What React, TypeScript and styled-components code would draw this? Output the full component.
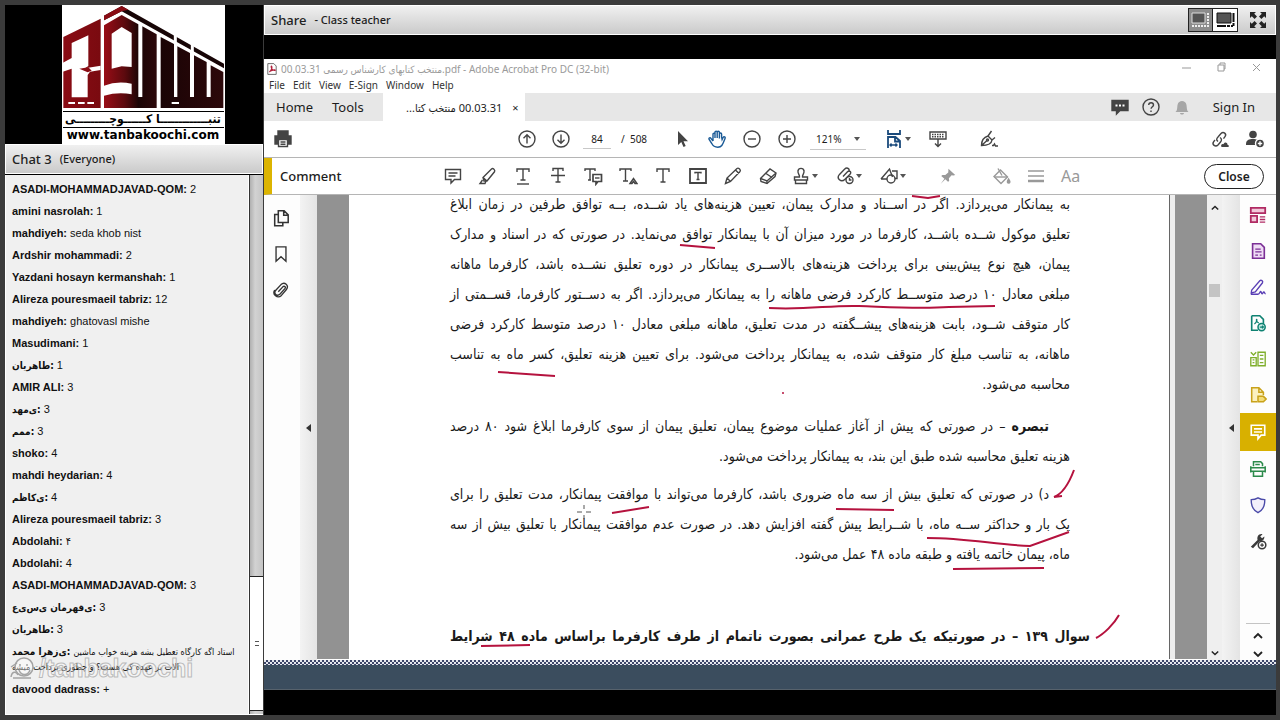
import React from 'react';
import styled, { createGlobalStyle } from 'styled-components';

const ui = '"Noto Sans", "Open Sans", "DejaVu Sans Condensed", sans-serif';
const persian = '"DejaVu Sans Condensed", "DejaVu Sans", sans-serif';

const Global = createGlobalStyle`
  *, *::before, *::after { box-sizing: border-box; }
  body { margin: 0; background: #3b3b3b; font-family: ${ui}; color: #1c1c1c; }
  button, input, select { font: inherit; color: inherit; }
  button { background: none; border: 0; padding: 0; }
`;

/* ---------- meeting shell ---------- */
const Shell = styled.div`
  display: grid;
  grid-template-columns: 258px minmax(0, 1fr);
  gap: 1px;
  min-height: 100vh;
  padding: 5px 4px 5px 5px;
`;
const Side = styled.aside`
  display: flex;
  flex-direction: column;
  min-height: 0;
`;
const Video = styled.div`
  display: flex;
  justify-content: center;
  background: #000;
  height: 139px;
  padding-left: 18px;
`;
const Brand = styled.figure`
  margin: 0;
  width: 163px;
  background: #fff;
  color: #000;
  display: flex;
  flex-direction: column;
  overflow: hidden;
`;
const BrandName = styled.span`
  font: bold 12px/15px ${persian};
  height: 17px;
  margin: 0 1px;
  border-top: 1px solid #000;
  border-bottom: 1px solid #000;
  text-align: center;
  white-space: nowrap;
`;
const BrandUrl = styled.span`
  font: bold 12px/15px "DejaVu Sans", sans-serif;
  text-align: center;
`;
const PodHeader = styled.header`
  display: flex;
  align-items: center;
  gap: 8px;
  height: 30px;
  padding: 0 5px 0 6px;
  border: 1px solid #fff;
  background: linear-gradient(#f0f0f0, #cacaca);
`;
const PodTitle = styled.h2`
  margin: 0;
  font-size: 13px;
  line-height: 18px;
  font-weight: 500;
  color: #222;
`;
const PodNote = styled.span`
  font-size: 11px;
  line-height: 18px;
  font-weight: 500;
`;
const ChatBody = styled.div`
  flex: 1;
  display: grid;
  grid-template-columns: minmax(0, 1fr) 14px;
  border-top: 1px solid #000;
  border-bottom: 1px solid #fff;
  background: #f0f0f0;
  position: relative;
`;
const Messages = styled.ul`
  list-style: none;
  margin: 0;
  padding: 3px 6px;
  border: solid #fff;
  border-width: 0 1px;
  font: 11px/16px "Liberation Sans", "DejaVu Sans Condensed", sans-serif;
  color: #111;
`;
const Message = styled.li`
  padding: 3px 0;
  white-space: nowrap;
`;
const Author = styled.b<{ $fa?: boolean }>`
  font-size: ${p => (p.$fa ? '10px' : '11px')};
  font-family: ${p => (p.$fa ? persian : 'inherit')};
  line-height: ${p => (p.$fa ? '10px' : 'inherit')};
`;
const PersianLine = styled.span<{ $block?: boolean }>`
  display: ${p => (p.$block ? 'block' : 'inline')};
  font: 9px/${p => (p.$block ? '16px' : '10px')} ${persian};
  text-align: left;
`;
const Watermark = styled.div`
  position: absolute;
  left: 5px;
  bottom: 32px;
  display: flex;
  align-items: center;
  gap: 3px;
  color: rgba(255, 255, 255, 0.3);
  font: bold 25px/28px "Liberation Sans", sans-serif;
  -webkit-text-stroke: 1px rgba(130, 130, 130, 0.5);
  pointer-events: none;
`;
const ChatScroll = styled.div`
  display: flex;
  flex-direction: column;
  justify-content: flex-end;
  background: linear-gradient(90deg, #b0b0b0, #d2d2d2 40%, #c4c4c4);
  border-left: 1px solid #333;
  padding-bottom: 3px;
`;
const ChatThumb = styled.div`
  height: 135px;
  background: #fff;
  border: solid #222;
  border-width: 1px 0;
  display: flex;
  align-items: center;
  justify-content: center;
`;
const Grip = styled.span`
  width: 4px;
  height: 5px;
  border: solid #555;
  border-width: 1px 0;
`;

const Stage = styled.main`
  display: flex;
  flex-direction: column;
  min-width: 0;
  background: #000;
`;
const StageHeader = styled(PodHeader)`
  margin-bottom: 24px;
`;
const Push = styled.span`
  flex: 1;
`;
const ViewToggle = styled.button<{ $on?: boolean }>`
  width: 25px;
  height: 24px;
  display: grid;
  place-items: center;
  border: 1px solid #222;
  background: ${p => (p.$on ? '#8c8c8c' : '#fff')};
  & + & { border-left: 0; }
`;
const ToggleGroup = styled.div`
  display: flex;
`;

/* ---------- document window ---------- */
const Window = styled.section`
  flex: 1;
  display: flex;
  flex-direction: column;
  background: #fff;
  min-width: 0;
`;
const TitleBar = styled.div`
  display: flex;
  align-items: center;
  height: 19px;
  padding: 0 14px 0 2px;
  gap: 3px;
  font-size: 10px;
  color: #9a9a9a;
  white-space: nowrap;
`;
const WindowButtons = styled.div`
  display: flex;
  gap: 24px;
`;
const MenuBar = styled.nav`
  display: flex;
  gap: 8px;
  height: 15px;
  padding: 0 5px;
  font-size: 10px;
  line-height: 15px;
  color: #333;
`;
const MenuItem = styled.button`
  line-height: 15px;
`;
const Tabs = styled.div`
  display: flex;
  align-items: center;
  height: 28px;
  background: #e7e7e7;
  font-size: 13px;
  padding-right: 9px;
`;
const Tab = styled.button`
  padding: 0 12px;
  line-height: 28px;
  & + & { margin-left: -5px; }
`;
const FileTab = styled.div`
  display: flex;
  align-items: center;
  justify-content: flex-end;
  gap: 10px;
  width: 142px;
  height: 28px;
  margin-left: 7px;
  padding-right: 6px;
  background: #fff;
  font-size: 11px;
  white-space: nowrap;
`;
const TabActions = styled.div`
  display: flex;
  align-items: center;
  gap: 7px;
  margin-left: auto;
`;
const Bar = styled.div`
  display: flex;
  align-items: center;
  height: 37px;
  border-bottom: 1px solid #b5b5b5;
  padding: 0 9px 0 7px;
`;
const CommentBar = styled(Bar)`
  border-left: 8px solid #dcb400;
  padding: 0 12px 0 8px;
`;
const Lead = styled.div<{ $w: number }>`
  width: ${p => p.$w}px;
  flex: none;
  font-size: 13px;
  line-height: 20px;
  font-weight: 500;
`;
const Group = styled.div<{ $gap?: number; $before?: number }>`
  display: flex;
  align-items: center;
  gap: ${p => p.$gap ?? 11}px;
  margin-left: ${p => p.$before ?? 0}px;
`;
const Tool = styled.button<{ $tone?: string; $wide?: boolean }>`
  display: flex;
  align-items: center;
  gap: 1px;
  width: ${p => (p.$wide ? 38 : 24)}px;
  height: 26px;
  padding: 0 2px;
  color: ${p => p.$tone ?? '#444'};
`;
const PageInput = styled.input`
  width: 28px;
  height: 20px;
  border: 0;
  border-bottom: 1px solid #c8c8c8;
  background: none;
  text-align: center;
  font-size: 10px;
  padding: 0;
`;
const Small = styled.span`
  font-size: 10px;
  white-space: nowrap;
`;
const ZoomSelect = styled.select`
  width: 56px;
  height: 21px;
  border: 0;
  border-bottom: 1px solid #c8c8c8;
  background: none;
  appearance: none;
  font-size: 10px;
  padding: 0 6px;
`;
const ZoomBox = styled.label`
  display: flex;
  align-items: center;
  & svg { margin-left: -12px; pointer-events: none; }
`;
const CloseButton = styled.button`
  width: 60px;
  height: 25px;
  border: 1px solid #222;
  border-radius: 13px;
  font-size: 12px;
  font-weight: 600;
`;

const Work = styled.div`
  flex: 1;
  display: grid;
  grid-template-columns: 36px 17px minmax(0, 1fr) 15px 18px 36px;
  height: 464px;
`;
const Rail = styled.div`
  display: flex;
  flex-direction: column;
  align-items: center;
  background: #fdfdfd;
  padding-top: 2px;
`;
const NavRail = styled(Rail)`
  padding: 5px 2px 0 0;
`;
const RailButton = styled.button<{ $tone?: string; $on?: boolean }>`
  width: 100%;
  height: ${p => (p.$on ? 38 : 36)}px;
  flex: none;
  display: grid;
  place-items: center;
  color: ${p => (p.$on ? '#fff' : p.$tone ?? '#333')};
  background: ${p => (p.$on ? '#d8b000' : 'none')};
`;
const RailPager = styled.div`
  margin-top: auto;
  width: 24px;
  border-top: 1px solid #c4c4c4;
  display: flex;
  flex-direction: column;
  align-items: center;
  & button { height: 18px; }
`;
const Fold = styled.button<{ $side: 'l' | 'r' }>`
  display: flex;
  align-items: center;
  justify-content: ${p => (p.$side === 'l' ? 'center' : 'flex-end')};
  padding: ${p => (p.$side === 'l' ? '0' : '0 6px 0 0')};
  background: linear-gradient(90deg, #f3f3f3, #e4e4e4);
  color: #333;
`;
const Canvas = styled.div`
  background: #929292;
  padding: 0 32px;
  overflow: hidden;
  height: 464px;
`;
const Paper = styled.article`
  height: 100%;
  background: #fff;
  border-right: 5px solid #ededed;
  box-shadow: inset -1px 0 0 #666;
  display: flex;
  justify-content: flex-end;
  padding: 0 80px 0 20px;
  overflow: hidden;
`;
const Sheet = styled.div`
  position: relative;
  flex: none;
  width: 640px;
  margin-top: -6px;
  font: 14px/30px ${persian};
  color: #1a1a1a;
`;
const Para = styled.p<{ $gap: number; $indent?: boolean }>`
  margin: 0 20px ${p => p.$gap}px 0;
  & > span:first-child { padding-right: ${p => (p.$indent ? 21 : 0)}px; }
`;
const Line = styled.span<{ $end?: boolean }>`
  display: block;
  white-space: nowrap;
  text-align: justify;
  text-align-last: ${p => (p.$end ? 'right' : 'justify')};
`;
const Question = styled.h3`
  margin: 0;
  font-size: 14px;
  line-height: 30px;
  white-space: nowrap;
  text-align-last: justify;
`;
const Ink = styled.svg`
  position: absolute;
  left: 0;
  top: 0;
  overflow: visible;
  pointer-events: none;
`;
const PageScroll = styled.div`
  display: flex;
  flex-direction: column;
  align-items: center;
  justify-content: space-between;
  padding: 9px 0 3px;
  background: #efefef;
  color: #222;
`;
const PageThumb = styled.span`
  width: 11px;
  height: 13px;
  background: #c4c4c4;
  margin: 72px 0 auto;
`;
const Dither = styled.div`
  height: 5px;
  background: repeating-conic-gradient(#3c4668 0 25%, #e6e8ee 0 50%) 0 0 / 4px 4px;
`;
const TaskBar = styled.div`
  height: 25px;
  margin-bottom: 25px;
  background: #3b4d5e;
  border-bottom: 1px solid #57626c;
`;

/* ---------- drawings ---------- */
const icons: Record<string, React.ReactNode> = {
  print: (
    <>
      <path d="M5 2h10v4H5zM2 7h16v8h-3v-3H5v3H2z" fill="currentColor" />
      <path d="M5.500 10.500h9v7h-9zM7.500 13h5M7.500 15.300h5" fill="#fff" />
    </>
  ),
  up: (<><circle cx="10" cy="10" r="8" /><path d="M10 14.500V6M6.500 9.200L10 5.700l3.500 3.500" /></>),
  down: (<><circle cx="10" cy="10" r="8" /><path d="M10 5.500V14M6.500 10.800l3.500 3.500 3.500-3.500" /></>),
  cursor: <path d="M6 2v14l3.300-3 2.200 5 2.200-1-2.200-4.700H16z" fill="currentColor" stroke="none" />,
  hand: (
    <path d="M6 12V5.200c0-1.400 2-1.400 2 0V9M8 9V3.200c0-1.400 2.200-1.400 2.200 0V9M10.200 9V3.200c0-1.300 2.200-1.300 2.200 0V9.500M12.400 9.500V5c0-1.300 2.200-1.300 2.200 0v3l.5 2.500 1-2c.8-1.300 2.500-.6 2 .7-.8 2-1.500 4.800-3.300 7.300-1 1.400-2.300 1.700-4 1.700-3.300 0-4.800-1-6-3.700L2 10.200c-.5-1.300 1.200-2 2-.8l2 2.600" />
  ),
  minus: (<><circle cx="10" cy="10" r="8" /><path d="M6 10h8" /></>),
  plus: (<><circle cx="10" cy="10" r="8" /><path d="M6 10h8M10 6v8" /></>),
  fit: (
    <>
      <path d="M4 1v4h12V1M4 19V8h7.500l4.500 4v7M11 8v4.500h5" strokeWidth="1.800" />
      <path d="M6 16h7M7.500 14.500L6 16l1.500 1.500M11.500 14.500L13 16l-1.500 1.500" />
    </>
  ),
  keys: (<><path d="M2 3h16v7H2z" /><path d="M4 5.500h12M4 7.800h12" strokeDasharray="1.500 1" /><path d="M10 10v7M7 14.500l3 3 3-3" /></>),
  sign: (<><path d="M2.500 16.500c0-5 1.500-8 6.500-9.500l4 4c-.5 4-4.500 5.500-10.500 5.500zM2.500 16.500L8 11.500M9 7l3.500-5M13 11l3-2.500" /><circle cx="8.500" cy="11" r="1" /><path d="M13 16.500h1.500l1-1.500 1 2h2.500" /></>),
  share: (
    <>
      <path d="M8 12.500c-2-1.500-1.500-3 0-4.500l3-3.500c2.500-2.500 6 .5 4 3.200l-1.500 2M10 8.500c2 1.200 1.700 3 .5 4.500L8 16c-2.500 2.500-6.500-.3-4.300-3.300L5 11" />
      <path d="M11.500 18c-1.200-2 .8-3.500 2-2.700 1-2.800 4-1.800 4 .4 1.800.2 1.800 2.300.5 2.300z" fill="currentColor" stroke="none" />
    </>
  ),
  person: (
    <>
      <circle cx="8" cy="5.500" r="3.800" fill="currentColor" stroke="none" />
      <path d="M1 15c0-4 3-5 7-5s5 1 6 3v3H1z" fill="currentColor" stroke="none" />
      <circle cx="15" cy="14.500" r="4.500" fill="currentColor" stroke="#fff" />
      <path d="M12.800 14.500h4.400M15 12.300v4.400" stroke="#fff" />
    </>
  ),
  note: <path d="M2.500 3.500h15v10h-6L8 17v-3.500H2.500zM5.500 7h9M5.500 10h7" />,
  marker: (<><path d="M5 11.500L13.500 3c1.500-1.300 4 1 3 2.800L9 15H6zM5 11.500L9 15M4.500 14l-2.500 3.500h5l1-2.500" /></>),
  under: (<><path d="M4 6V3h12v3M10 3v11M7.500 14h5" /><path d="M4 18h12" /></>),
  strike: (<><path d="M5 5V2.500h10V5M10 2.500V16M7.500 16h5M3 9.500h14" /></>),
  replace: (<><path d="M2 5V3h10v2M7 3v11M5 14h3" /><path d="M10 8.500h8.500v7h-3.500L13 18v-2.500h-3z" fill="#fff" strokeWidth="1.700" /><path d="M12 12h4.500" /></>),
  insert: (<><path d="M2 5V3h11v2M7.500 3v12M5 15h5M12 17.500l3.500-5 3.500 5h-2l-1.500-2-1.500 2z" /></>),
  text: <path d="M4 6V3h12v3M10 3v13M7.500 16h5" />,
  box: (<><path d="M2 3h16v14H2z" strokeWidth="1.800" /><path d="M7 7.500V6.500h6v1M10 6.500v7M8.500 13.500h3" /></>),
  pencil: <path d="M2.500 17.500l1.500-5.500L14 2.500c1.500-1.200 4.300 1.500 3 3L7.500 15.500zM4 12l3.500 3.500M12.500 4l3.500 3.500" />,
  eraser: (<><path d="M2.500 12.500l9.500-9.500 6 4-1 3.500-8 7-6-2z" /><path d="M17.500 7.500L9 15l-6.500-2.500M9 15v2.500" /><path d="M8 7.500l6 4" /></>),
  stamp: <path d="M8.500 11c.5-2-2-3.500-1.500-6 .5-3.500 5.500-3.500 6 0 .5 2.500-2 4-1.500 6h5v3h-13v-3zM4.500 14v3.500h11V14" />,
  attach: (<><path d="M8 10.500l4.500-4.700c2-2 4.500.4 2.500 2.400l-5 5c-4 4-9-.8-5.500-4.800L9.500 3.300c3-2.800 6 .2 4 2.500" /><circle cx="14.500" cy="14" r="3.500" fill="#fff" /><path d="M14.500 12v2h2" /></>),
  shapes: (<><path d="M2 13L10.500 3l3 8M2 13h6M13 5h5v7.500h-2" /><circle cx="12" cy="13" r="4" /></>),
  pin: <path d="M10.500 2l7.500 7-2 .5-2-.3-3 3.300.3 3-1.300 1-3-3L2 18.500l4-5.500-3.500-3 1.300-1.200 3.200.2 3.300-3z" fill="currentColor" stroke="none" />,
  bucket: (<><path d="M3 10.500L9.500 4l7 7-6.500 6.500zM7 2.500l4 7" /><path d="M3.500 11h13" /><path d="M17.500 13c2 3 1.500 4 0 4s-1.500-1.500 0-4z" fill="currentColor" /></>),
  lines: (<><path d="M2 5h16M2 10h16" /><path d="M2 15h16" strokeWidth="2.500" /></>),
  bubble: (<><path d="M2 3.500h16v10h-8L6.500 17v-3.500H2z" fill="currentColor" /><path d="M5.500 8.500h2M9 8.500h2M12.500 8.500h2" stroke="#fff" strokeWidth="2" /></>),
  help: (<><circle cx="10" cy="10" r="8" /><path d="M7.700 8c0-3 4.800-3 4.800 0 0 1.700-2.400 1.700-2.400 3.700M10 13.500v1.500" /></>),
  bell: <path d="M3.500 15c2-1.500 1.500-4 2-7 .6-3 2.500-4 4.500-4s4 1 4.500 4c.5 3 0 5.500 2 7zM8 16h4c-.3 2-3.700 2-4 0z" fill="currentColor" stroke="none" />,
  pages: (<><path d="M7 2h6.500L18 6.500V15H7zM13 2v5h5" strokeWidth="1.700" /><path d="M7 6H3v12.500h9V15" strokeWidth="1.700" /></>),
  bookmark: <path d="M4.500 2h11v16L10 13l-5.500 5z" strokeWidth="1.500" />,
  clip: <path d="M7 12l5-5.500c1.800-1.700 3.700.3 2.300 2L9 14.500c-3.500 3.400-7.500-.5-5-4L10 4c4-3.800 9.300 1 6 5.500L10.500 16C6 20 0 15 3 10" strokeWidth="1.500" />,
  tiles: (<><path d="M2 2h16v6H2zM2 11h7v7H2z" strokeWidth="2" fill="#f1c9da" /><path d="M12 12h6M12 15h6M12 18h6" /></>),
  form: (<><path d="M4 2h9l4 4v12H4z" strokeWidth="1.800" fill="#efdcf5" /><path d="M7 8h6M7 11h7M7 14.500h3M12 14.500h2" /></>),
  pen: <path d="M3 13.500L12 3c1.500-1.500 4 .5 3 2.300L7 15.500l-4.500 1zM2 18h8c2 0 2-3 3-3s.5 2.500 1.500 2.500 1-2 2-2 .5 2 2 2" strokeWidth="1.500" />,
  exportPdf: (<><path d="M3 2h9l4 4v5M10 18H3V2" strokeWidth="1.800" /><path d="M6 11c3-2 3-5 2.500-5S8 9 11 10" /><circle cx="14" cy="14.500" r="4" fill="#c9ebe5" strokeWidth="1.700" /><path d="M12 14.500h4M14.500 13l1.500 1.500-1.500 1.500" /></>),
  organize: (<><path d="M10 2.500h8v15h-8zM2 2.500l3 3 3-3M2 8.500h6v9H2zM12 6h4M12 10h4M12 14h4M4 11h2M4 14h2" strokeWidth="1.500" /></>),
  sendFile: (<><path d="M9 17.500H3V2h8l5 5v3M11 2v5h5" strokeWidth="1.700" fill="#fbf1c0" /><path d="M10 11.500h6l3 3-3 3h-6z" fill="#f3dc78" strokeWidth="1.700" /></>),
  noteBold: (<><path d="M2.500 2.500h15v11h-4L10 17.500V13.500H2.500zM5.500 6.500h9M5.500 10h9" strokeWidth="1.800" /></>),
  scan: (<><path d="M5 7V2h8l2 2v3M2 7v7M18 7v7M2 8.500h16M2 12.500h16M5 12.500V18h10v-5.500M7 5h5" strokeWidth="1.700" /></>),
  shield: <path d="M10 2c2.500 1.500 5 2 7.500 2 .3 7-1.500 11.500-7.500 14.500C4 15.500 2.200 11 2.500 4 5 4 7.500 3.500 10 2z" strokeWidth="1.500" fill="#f2effb" />,
  wrench: (<><path d="M2 16.500L9.500 9C8.500 5 11 1.500 15 2.500L12.500 5l2 2L17 5c.5 3-2 5.500-5 5l-7.500 8z" fill="currentColor" stroke="none" /><circle cx="14.500" cy="14.500" r="4.200" fill="#fff" strokeWidth="1.700" /><path d="M12.500 14.500h4M14.500 12.500v4" /></>),
  pdf: (<><path d="M3 1h10l4 4v14H3z" stroke="#555" /><path d="M5.500 15c4-2 5-8 4-9.500s-1.500 2 .5 4.500 3 3 5 2.200-3-1.500-9 2" stroke="#b0203a" strokeWidth="2" /></>),
};

function Icon({ name, size = 20 }: { name: string; size?: number }) {
  return (
    <svg width={size} height={size} viewBox="0 0 20 20" fill="none" stroke="currentColor" strokeWidth="1.400" aria-hidden="true">
      {icons[name]}
    </svg>
  );
}
const Caret = () => (
  <svg width="6" height="4" viewBox="0 0 6 4" aria-hidden="true"><path d="M0 0h6L3 4z" fill="#555" /></svg>
);
const Chevron = ({ up, size = 10 }: { up?: boolean; size?: number }) => (
  <svg width={size} height={size} viewBox="0 0 10 10" fill="none" stroke="#222" strokeWidth="1.800" aria-hidden="true">
    <path d={up ? 'M1 7l4-4 4 4' : 'M1 3l4 4 4-4'} />
  </svg>
);
const FoldArrow = () => (
  <svg width="5" height="8" viewBox="0 0 5 8" aria-hidden="true"><path d="M5 0v8L0 4z" fill="currentColor" /></svg>
);

function Building() {
  return (
    <svg width="163" height="106" viewBox="186 14 489 318" aria-hidden="true">
      <defs>
        <linearGradient id="brick" x1="0" x2="1">
          <stop offset="0" stopColor="#8a0c14" />
          <stop offset="1" stopColor="#7a0a10" />
        </linearGradient>
        <linearGradient id="nine" x1="0" x2="1">
          <stop offset="0" stopColor="#990d16" />
          <stop offset="0.600" stopColor="#5c0a0e" />
          <stop offset="1" stopColor="#1d0505" />
        </linearGradient>
        <linearGradient id="bars" x1="0" x2="1">
          <stop offset="0" stopColor="#1a0405" />
          <stop offset="1" stopColor="#2c080a" />
        </linearGradient>
      </defs>
      <path d="M190 110L302 55v268H190z" fill="url(#brick)" />
      <path d="M186 189l29-16v-45l50-23v92l-10 7 47-8v13l-32 5-7 10v67h-48v-86l-29 10z" fill="#fff" />
      <path d="M238 205l27-4 10 10-12 5z" fill="#8a0c14" />
      <path d="M205 308h20M234 308h20M262 308h20" stroke="#fff" strokeWidth="6" />
      <path d="M312 46L365 17 672 190v14L365 33l-53 27z" fill="#170506" />
      <path d="M312 46L365 17l20 11-20 5-53 27z" fill="#8a0c14" />
      <path d="M526 90v50M577 120v50" stroke="#fff" strokeWidth="9" />
      <path d="M312 75l53-31 50 28v251H312z" fill="url(#nine)" />
      <path d="M335 100l30-20 30 18v102l-30-2-30 7z" fill="#fff" />
      <path d="M312 256q40-16 83-6v32q-40-8-83 4z" fill="#fff" />
      <path d="M427 78l43 24v221h-57v-33h14z" fill="url(#bars)" />
      <path d="M482 110l40 21v159h10V138l38 20v132h12V165l38 20v105h12V195l38 20v108H482z" fill="url(#bars)" />
      <path d="M515 308h22" stroke="#fff" strokeWidth="6" />
    </svg>
  );
}

const FaceMark = () => (
  <svg width="26" height="26" viewBox="0 0 26 26" fill="none" stroke="#a4a4a4" strokeWidth="1.500" aria-hidden="true">
    <circle cx="14" cy="12" r="9" fill="#ffffff60" />
    <path d="M1 12l6-4M1 22c1-6 5-6 7-2M9 15c2 6 9 6 11 0M10 9v2M17 9v2M3 23h18" />
  </svg>
);

/* ---------- content ---------- */
type Msg = { who: string; text?: string; fa?: boolean; lines?: string[] };
const messages: Msg[] = [
  { who: 'ASADI-MOHAMMADJAVAD-QOM:', text: '2' },
  { who: 'amini nasrolah:', text: '1' },
  { who: 'mahdiyeh:', text: 'seda khob nist' },
  { who: 'Ardshir mohammadi:', text: '2' },
  { who: 'Yazdani hosayn kermanshah:', text: '1' },
  { who: 'Alireza pouresmaeil tabriz:', text: '12' },
  { who: 'mahdiyeh:', text: 'ghatovasl mishe' },
  { who: 'Masudimani:', text: '1' },
  { who: 'طاهریان', text: '1', fa: true },
  { who: 'AMIR ALI:', text: '3' },
  { who: 'ی‌مهد', text: '3', fa: true },
  { who: 'ممم', text: '3', fa: true },
  { who: 'shoko:', text: '4' },
  { who: 'mahdi heydarian:', text: '4' },
  { who: 'ی‌کاظم', text: '4', fa: true },
  { who: 'Alireza pouresmaeil tabriz:', text: '3' },
  { who: 'Abdolahi:', text: '۴' },
  { who: 'Abdolahi:', text: '4' },
  { who: 'ASADI-MOHAMMADJAVAD-QOM:', text: '3' },
  { who: 'ی‌قهرمان ی‌س‌ی‌ع', text: '3', fa: true },
  { who: 'طاهریان', text: '3', fa: true },
  {
    who: 'ی‌زهرا محمد',
    fa: true,
    lines: ['استاد اگه کارگاه  تعطیل بشه هزینه خواب ماشین', 'الات بر عهده کی هست؟ و چطوری پرداخت میشه'],
  },
  { who: 'davood dadrass:', text: '+' },
];

const paragraphs: { gap: number; indent?: boolean; lead?: string; lines: string[] }[] = [
  {
    gap: 12,
    lines: [
      'به پیمانکار می‌پردازد. اگر در اســناد و مدارک پیمان، تعیین هزینه‌های یاد شــده، بــه توافق طرفین در زمان ابلاغ',
      'تعلیق موکول شــده باشــد، کارفرما در مورد میزان آن با پیمانکار توافق می‌نماید. در صورتی که در اسناد و مدارک',
      'پیمان، هیچ نوع پیش‌بینی برای پرداخت هزینه‌های بالاســری پیمانکار در دوره تعلیق نشــده باشد، کارفرما ماهانه',
      'مبلغی معادل ۱۰ درصد متوســط کارکرد فرضی ماهانه را به پیمانکار می‌پردازد. اگر به دســتور کارفرما، قســمتی از',
      'کار متوقف شــود، بابت هزینه‌های پیشــگفته در مدت تعلیق، ماهانه مبلغی معادل ۱۰ درصد متوسط کارکرد فرضی',
      'ماهانه، به تناسب مبلغ کار متوقف شده، به پیمانکار پرداخت می‌شود. برای تعیین هزینه تعلیق، کسر ماه به تناسب',
      'محاسبه می‌شود.',
    ],
  },
  {
    gap: 8,
    indent: true,
    lead: 'تبصره',
    lines: [
      ' – در صورتی که پیش از آغاز عملیات موضوع پیمان، تعلیق پیمان از سوی کارفرما ابلاغ شود ۸۰ درصد',
      'هزینه تعلیق محاسبه شده طبق این بند، به پیمانکار پرداخت می‌شود.',
    ],
  },
  {
    gap: 52,
    indent: true,
    lines: [
      'د) در صورتی که تعلیق بیش از سه ماه ضروری باشد، کارفرما می‌تواند با موافقت پیمانکار، مدت تعلیق را برای',
      'یک بار و حداکثر ســه ماه، با شــرایط پیش گفته افزایش دهد. در صورت عدم موافقت پیمانکار با تعلیق بیش از سه',
      'ماه، پیمان خاتمه یافته و طبقه ماده ۴۸ عمل می‌شود.',
    ],
  },
];

const commentTools = ['note', 'marker', 'under', 'strike', 'replace', 'insert', 'text', 'box', 'pencil', 'eraser'];
const sideTools: [string, string][] = [
  ['tiles', '#b02a63'], ['form', '#7b2f96'], ['pen', '#5a3fb5'], ['exportPdf', '#0f8272'], ['organize', '#7fae2c'],
  ['sendFile', '#c9a21a'], ['noteBold', ''], ['scan', '#2c8a4b'], ['shield', '#4a4aa8'], ['wrench', '#3a3a3a'],
];

export default function App() {
  return (
    <>
      <Global />
      <Shell>
        <Side>
          <Video>
            <Brand>
              <Building />
              <BrandName lang="fa" dir="rtl">تنبـــــــــــــا کــــــوچـــــــــی</BrandName>
              <BrandUrl>www.tanbakoochi.com</BrandUrl>
            </Brand>
          </Video>
          <PodHeader>
            <PodTitle>Chat 3</PodTitle>
            <PodNote>(Everyone)</PodNote>
          </PodHeader>
          <ChatBody>
            <Messages>
              {messages.map((m, i) => (
                <Message key={i}>
                  <Author $fa={m.fa}>{m.fa ? <><bdi>{m.who}</bdi>:</> : m.who}</Author>{' '}
                  {m.text}
                  {m.lines?.map((l, n) => (
                    <PersianLine key={l} dir="rtl" lang="fa" $block={n > 0}>{l}</PersianLine>
                  ))}
                </Message>
              ))}
            </Messages>
            <ChatScroll><ChatThumb><Grip /></ChatThumb></ChatScroll>
            <Watermark><FaceMark />/tanbakoochi</Watermark>
          </ChatBody>
        </Side>

        <Stage>
          <StageHeader>
            <PodTitle>Share</PodTitle>
            <PodNote>- Class teacher</PodNote>
            <Push />
            <ToggleGroup>
              <ViewToggle $on aria-label="Side layout">
                <svg width="19" height="16" viewBox="0 0 19 16"><path d="M1 1h13v10H1z" fill="#555" stroke="#ddd" /><path d="M17 1v14M1 14h16" stroke="#eee" strokeWidth="2" strokeDasharray="2 1" /></svg>
              </ViewToggle>
              <ViewToggle aria-label="Full layout">
                <svg width="19" height="16" viewBox="0 0 19 16"><path d="M1 1h14v10H1z" fill="#555" stroke="#111" /><path d="M17.500 1v14M1 14h16" stroke="#111" strokeWidth="2" strokeDasharray="9 1 3 1" /></svg>
              </ViewToggle>
            </ToggleGroup>
            <Tool aria-label="Full screen" $tone="#222">
              <svg width="20" height="20" viewBox="0 0 20 20" fill="currentColor"><path d="M2 2h6L6.200 3.800 9 6.600 6.600 9 3.800 6.200 2 8zM18 2v6l-1.800-1.800L13.400 9 11 6.600l2.800-2.800L12 2zM2 18v-6l1.800 1.800L6.600 11 9 13.400l-2.800 2.800L8 18zM18 18h-6l1.800-1.800-2.800-2.800 2.400-2.400 2.800 2.800L18 12z" /></svg>
            </Tool>
          </StageHeader>

          <Window>
            <TitleBar>
              <Icon name="pdf" size={12} />
              <span>00.03.31 منتخب کتابهای کارشناس رسمی.pdf - Adobe Acrobat Pro DC (32-bit)</span>
              <Push />
              <WindowButtons>
                {['M1 6h9', 'M2 3h6v6H2zM4 3V1h5v6H8', 'M2 2l7 7M9 2l-7 7'].map((d, i) => (
                  <button key={d} aria-label={['Minimize', 'Restore', 'Close window'][i]}>
                    <svg width="11" height="11" viewBox="0 0 11 11" fill="none" stroke="#999"><path d={d} /></svg>
                  </button>
                ))}
              </WindowButtons>
            </TitleBar>
            <MenuBar>
              {['File', 'Edit', 'View', 'E-Sign', 'Window', 'Help'].map(x => <MenuItem key={x}>{x}</MenuItem>)}
            </MenuBar>
            <Tabs>
              <Tab>Home</Tab>
              <Tab>Tools</Tab>
              <FileTab><span dir="rtl">00.03.31 منتخب کتا...</span><button aria-label="Close tab">×</button></FileTab>
              <TabActions>
                <Tool aria-label="Messages"><Icon name="bubble" /></Tool>
                <Tool aria-label="Help"><Icon name="help" /></Tool>
                <Tool aria-label="Notifications" $tone="#a6a6a6"><Icon name="bell" /></Tool>
                <Tab>Sign In</Tab>
              </TabActions>
            </Tabs>
            <Bar>
              <Lead $w={244}><Tool aria-label="Print"><Icon name="print" /></Tool></Lead>
              <Group $gap={10}>
                <Tool aria-label="Previous page"><Icon name="up" /></Tool>
                <Tool aria-label="Next page"><Icon name="down" /></Tool>
                <PageInput aria-label="Page" defaultValue="84" />
                <Small>/&nbsp; 508</Small>
              </Group>
              <Group $before={23}>
                <Tool aria-label="Select"><Icon name="cursor" /></Tool>
                <Tool aria-label="Pan" $tone="#1a5a96"><Icon name="hand" /></Tool>
                <Tool aria-label="Zoom out"><Icon name="minus" /></Tool>
                <Tool aria-label="Zoom in"><Icon name="plus" /></Tool>
                <ZoomBox>
                  <ZoomSelect aria-label="Zoom level"><option>121%</option></ZoomSelect><Caret />
                </ZoomBox>
              </Group>
              <Group $before={22} $gap={6}>
                <Tool aria-label="Fit width" $wide $tone="#1a4a7c"><Icon name="fit" /><Caret /></Tool>
                <Tool aria-label="Keyboard"><Icon name="keys" /></Tool>
              </Group>
              <Group $before={27}><Tool aria-label="Sign"><Icon name="sign" /></Tool></Group>
              <Push />
              <Group>
                <Tool aria-label="Share link"><Icon name="share" /></Tool>
                <Tool aria-label="Add people"><Icon name="person" /></Tool>
              </Group>
            </Bar>
            <CommentBar>
              <Lead $w={161}>Comment</Lead>
              <Group>
                {commentTools.map(n => <Tool key={n} aria-label={n}><Icon name={n} /></Tool>)}
              </Group>
              <Group $before={9} $gap={6}>
                {['stamp', 'attach', 'shapes'].map(n => <Tool key={n} aria-label={n} $wide><Icon name={n} /><Caret /></Tool>)}
              </Group>
              <Group $before={22}><Tool aria-label="Pin" $tone="#999"><Icon name="pin" size={18} /></Tool></Group>
              <Group $before={28}>
                <Tool aria-label="Fill" $tone="#999"><Icon name="bucket" /></Tool>
                <Tool aria-label="Line weight" $tone="#999"><Icon name="lines" /></Tool>
                <Tool aria-label="Text style" $tone="#999">Aa</Tool>
              </Group>
              <Push />
              <CloseButton>Close</CloseButton>
            </CommentBar>
            <Work>
              <NavRail>
                {['pages', 'bookmark', 'clip'].map(n => <RailButton key={n} aria-label={n}><Icon name={n} size={18} /></RailButton>)}
              </NavRail>
              <Fold $side="l" aria-label="Expand navigation"><FoldArrow /></Fold>
              <Canvas>
                <Paper>
                  <Sheet lang="fa" dir="rtl">
                    {paragraphs.map((p, i) => (
                      <Para key={i} $gap={p.gap} $indent={p.indent}>
                        {p.lines.map((l, n) => (
                          <Line key={l} $end={n === p.lines.length - 1}>
                            {n === 0 && p.lead && <b>{p.lead}</b>}{l}
                          </Line>
                        ))}
                      </Para>
                    ))}
                    <Question>سوال ۱۳۹ – در صورتیکه یک طرح عمرانی بصورت ناتمام از طرف کارفرما براساس ماده ۴۸ شرایط</Question>
                    <Ink width="640" height="464" viewBox="450 189 640 464" fill="none" stroke="#b5123e" strokeWidth="2" aria-hidden="true">
                      <path d="M680 245l35 3M769 308c40 2 60-3 90-2s60 3 90 1l46-1M498 372l57 4M836 509l58 1M612 513l37-6" />
                      <path d="M927 538c40 0 70 7 103 8l39-14M953 569l91-1M481 646l49-1" />
                      <path d="M1074 470c-6 16-12 24-20 27l8-1M1119 615c-5 9-15 19-23 23M912 196l16 2 12-2" />
                      <circle cx="783" cy="393" r="1" fill="#b5123e" stroke="none" />
                      <path d="M577 512h5M586 512h5M584 505v4M584 515v4" stroke="#555" strokeWidth="1" />
                    </Ink>
                  </Sheet>
                </Paper>
              </Canvas>
              <PageScroll><Chevron up size={8} /><PageThumb /><Chevron size={8} /></PageScroll>
              <Fold $side="r" aria-label="Collapse tools"><FoldArrow /></Fold>
              <Rail>
                {sideTools.map(([n, c]) => (
                  <RailButton key={n} aria-label={n} $tone={c} $on={n === 'noteBold'}><Icon name={n} size={18} /></RailButton>
                ))}
                <RailPager>
                  <button aria-label="Previous tools"><Chevron up /></button>
                  <button aria-label="More tools"><Chevron /></button>
                </RailPager>
              </Rail>
            </Work>
          </Window>
          <Dither />
          <TaskBar />
        </Stage>
      </Shell>
    </>
  );
}
